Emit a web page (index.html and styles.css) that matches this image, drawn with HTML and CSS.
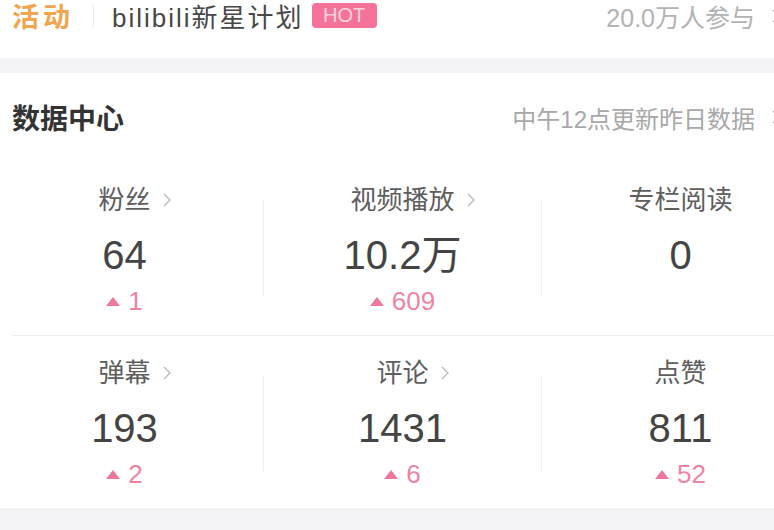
FILE: index.html
```html
<!DOCTYPE html>
<html lang="zh-CN">
<head>
<meta charset="UTF-8" />
<title>数据中心</title>
<link rel="stylesheet" href="styles.css">
</head>
<body>

<div class="page">
    <div class="activity">
        <span class="activity-tag">活动</span>
        <span class="activity-sep"></span>
        <span class="activity-name">bilibili新星计划</span>
        <span class="hot">HOT</span>
        <span class="activity-count">20.0万人参与</span>
        <svg class="arrow" viewBox="0 0 8 14"><polyline points="1,1 7,7 1,13" /></svg>
    </div>

    <div class="gap"></div>

    <div class="data">
        <div class="data-head">
            <span class="data-title">数据中心</span>
            <span class="data-note">中午12点更新昨日数据</span>
            <svg class="arrow" viewBox="0 0 8 14"><polyline points="1,1 7,7 1,13" /></svg>
        </div>

        <div class="stats-row">
            <div class="stat">
                <span class="stat-label">粉丝<svg class="more" viewBox="0 0 8 14"><polyline points="1,1 7,7 1,13" /></svg></span>
                <span class="stat-value">64</span>
                <span class="stat-delta"><i class="up"></i>1</span>
            </div>
            <div class="stat-sep"></div>
            <div class="stat">
                <span class="stat-label">视频播放<svg class="more" viewBox="0 0 8 14"><polyline points="1,1 7,7 1,13" /></svg></span>
                <span class="stat-value">10.2万</span>
                <span class="stat-delta"><i class="up"></i>609</span>
            </div>
            <div class="stat-sep"></div>
            <div class="stat">
                <span class="stat-label">专栏阅读</span>
                <span class="stat-value">0</span>
            </div>
        </div>

        <div class="row-line"></div>

        <div class="stats-row second">
            <div class="stat">
                <span class="stat-label">弹幕<svg class="more" viewBox="0 0 8 14"><polyline points="1,1 7,7 1,13" /></svg></span>
                <span class="stat-value">193</span>
                <span class="stat-delta"><i class="up"></i>2</span>
            </div>
            <div class="stat-sep"></div>
            <div class="stat">
                <span class="stat-label">评论<svg class="more" viewBox="0 0 8 14"><polyline points="1,1 7,7 1,13" /></svg></span>
                <span class="stat-value">1431</span>
                <span class="stat-delta"><i class="up"></i>6</span>
            </div>
            <div class="stat-sep"></div>
            <div class="stat">
                <span class="stat-label">点赞</span>
                <span class="stat-value">811</span>
                <span class="stat-delta"><i class="up"></i>52</span>
            </div>
        </div>
    </div>

    <div class="gap bottom"></div>
</div>

</body>
</html>
```

FILE: styles.css
```css
html,
body {
    margin: 0;
    padding: 0;
}

body {
    width: 774px;
    height: 530px;
    overflow: hidden;
    background-color: #ffffff;
    font-family: "Liberation Sans", "Noto Sans CJK SC", sans-serif;
}

.page {
    width: 790px;
}

/* Barra de atividade */
.activity {
    display: flex;
    align-items: center;
    height: 31px;
    padding: 0 10px 27px 12px;
}

.activity-tag {
    font-size: 27px;
    font-weight: 700;
    color: #f3a44e;
    letter-spacing: 4px;
}

.activity-sep {
    width: 1px;
    height: 22px;
    background-color: #ececec;
    margin: 0 18px 0 19px;
}

.activity-name {
    font-size: 26px;
    letter-spacing: 2px;
    color: #474747;
}

.hot {
    margin-left: 8px;
    width: 65px;
    height: 25px;
    border-radius: 4px;
    background-color: #f5739a;
    color: #fcd3de;
    font-size: 20px;
    display: flex;
    align-items: center;
    justify-content: center;
}

.activity-count {
    margin-left: auto;
    font-size: 25px;
    color: #b3b3b3;
}

.arrow {
    margin-left: 17px;
    width: 8px;
    height: 14px;
}

.arrow polyline,
.more polyline {
    fill: none;
    stroke: #bcbcbc;
    stroke-width: 1.4;
}

.gap {
    height: 15px;
    background-color: #f4f4f6;
}

.gap.bottom {
    height: 22px;
}

/* Centro de dados */
.data-head {
    display: flex;
    align-items: center;
    height: 88px;
    padding: 0 10px 0 12px;
}

.data-title {
    font-size: 28px;
    font-weight: 700;
    color: #333333;
}

.data-note {
    margin-left: auto;
    font-size: 24px;
    color: #a8a8a8;
}

.stats-row {
    display: flex;
    margin-left: -14px;
}

.stat {
    flex: 0 0 277px;
    display: flex;
    flex-direction: column;
    align-items: center;
    padding: 24px 0 19px 0;
}

.stats-row.second .stat {
    padding-top: 22px;
}

.stat-label {
    position: relative;
    font-size: 26px;
    line-height: 30px;
    color: #5e5e5e;
}

.stat-label .more {
    position: absolute;
    left: calc(100% + 12px);
    top: 8px;
    width: 8px;
    height: 14px;
}

.stat-value {
    margin-top: 18px;
    font-size: 40px;
    line-height: 44px;
    color: #444444;
}

.stat-delta {
    margin-top: 9px;
    display: flex;
    align-items: center;
    gap: 8px;
    font-size: 26px;
    line-height: 30px;
    color: #ef83a2;
}

.up {
    width: 0;
    height: 0;
    border-left: 7.5px solid transparent;
    border-right: 7.5px solid transparent;
    border-bottom: 9px solid #ee7899;
}

.stat-sep {
    flex: 0 0 1px;
    height: 96px;
    margin-top: 39px;
    background-color: #efefef;
}

.row-line {
    height: 1px;
    margin-left: 12px;
    background-color: #ededed;
}
```
